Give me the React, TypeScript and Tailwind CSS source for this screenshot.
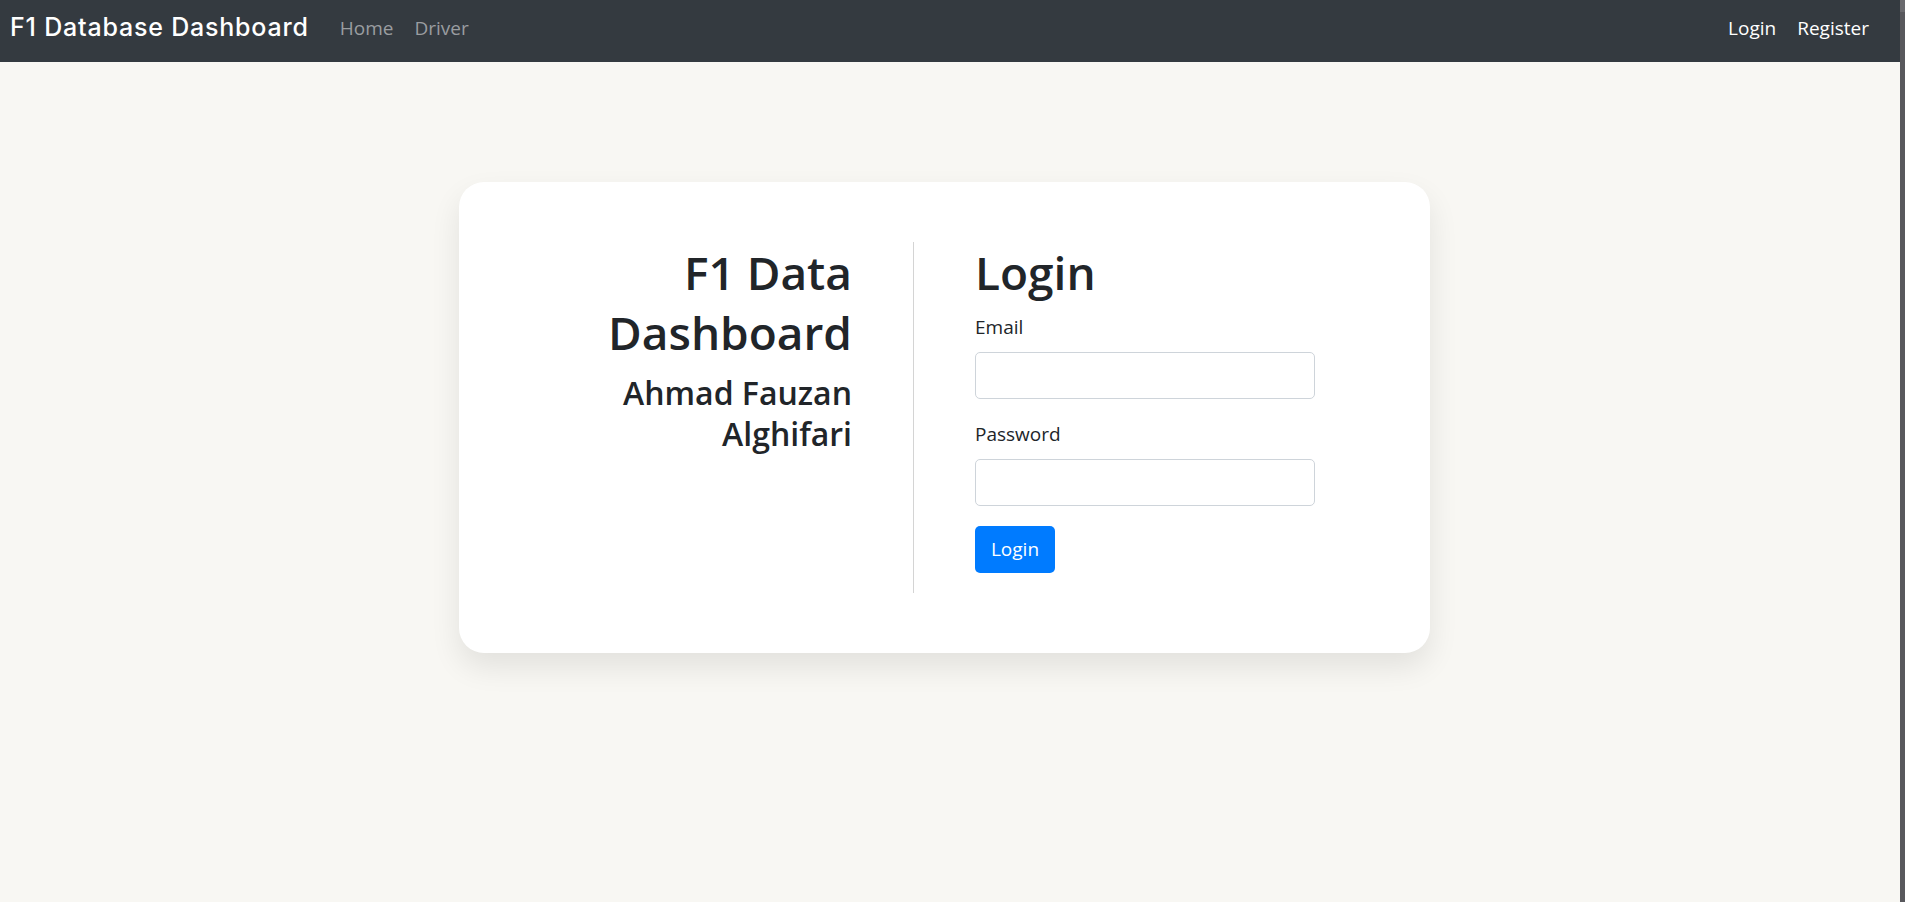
import React from 'react'

const Navbar = () => {
  return (
    <nav className="flex h-[62px] items-center justify-between bg-[#343a40] pb-[6px] pl-[10px] pr-[31px]">
      <div className="flex items-center">
        <a
          href="#"
          className="font-['Inter',sans-serif] text-[25px] font-medium tracking-[0.8px] text-white"
        >
          F1 Database Dashboard
        </a>
        <div className="ml-[31px] flex gap-x-[21px] text-[19px] text-[#9a9da0]">
          <a href="#">Home</a>
          <a href="#">Driver</a>
        </div>
      </div>
      <div className="flex gap-x-[21px] text-[19px] text-white">
        <a href="#">Login</a>
        <a href="#">Register</a>
      </div>
    </nav>
  )
}

const LoginCard = () => {
  return (
    <div className="ml-[459px] mt-[120px] flex w-[971px] rounded-[25px] bg-white py-[60px] shadow-[0_14px_30px_rgba(0,0,0,0.09)]">
      <div className="w-[455px] border-r border-[#d4d4d4] pr-[61px] text-right text-[#212529]">
        <h1 className="mb-[10px] ml-auto w-[300px] text-[46px] font-semibold leading-[60px]">
          F1 Data Dashboard
        </h1>
        <h3 className="ml-auto w-[270px] text-[32px] font-semibold leading-[41px]">
          Ahmad Fauzan Alghifari
        </h3>
      </div>
      <form className="pb-[20px] pl-[61px] text-[#212529]">
        <h1 className="mb-[10px] text-[46px] font-semibold leading-[60px]">Login</h1>
        <div className="mb-[20px]">
          <label className="mb-[10px] block text-[19px] leading-[30px]" htmlFor="email">
            Email
          </label>
          <input
            id="email"
            type="email"
            className="block h-[47px] w-[340px] rounded-[5px] border border-[#ced4da] bg-white px-[15px] outline-none"
          />
        </div>
        <div className="mb-[20px]">
          <label className="mb-[10px] block text-[19px] leading-[30px]" htmlFor="password">
            Password
          </label>
          <input
            id="password"
            type="password"
            className="block h-[47px] w-[340px] rounded-[5px] border border-[#ced4da] bg-white px-[15px] outline-none"
          />
        </div>
        <button
          type="button"
          className="h-[47px] w-[80px] rounded-[5px] bg-[#007bff] text-[19px] text-white"
        >
          Login
        </button>
      </form>
    </div>
  )
}

export default function App() {
  return (
    <div className="flex h-[902px] font-['Open_Sans',sans-serif]">
      <div className="flex-1 bg-[#f8f7f3]">
        <Navbar />
        <LoginCard />
      </div>
      <div className="flex w-[5px] flex-col bg-[#58585c]">
        <div className="h-[12px] bg-[#6a6a6e]" />
      </div>
    </div>
  )
}
